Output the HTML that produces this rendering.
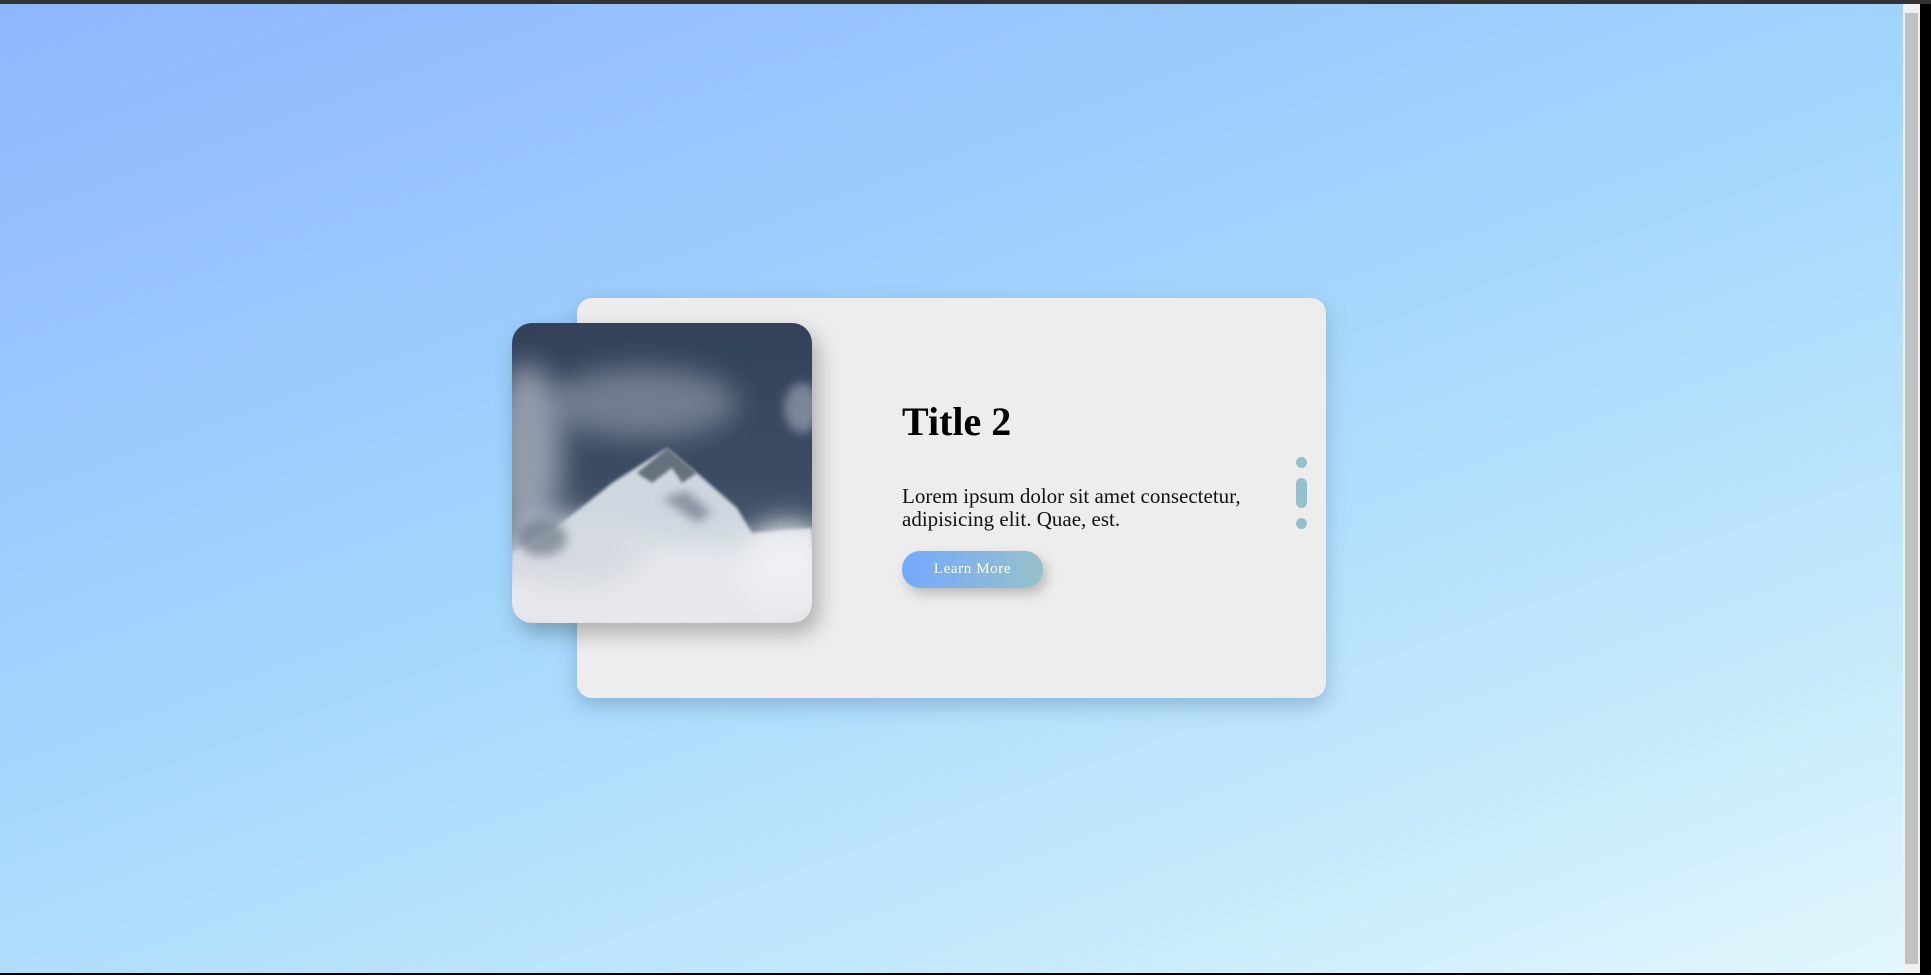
<!DOCTYPE html>
<html><head><meta charset="utf-8"><style>
html,body{margin:0;padding:0;width:1931px;height:975px;overflow:hidden;background:#000}
.page{position:absolute;left:0;top:4px;width:1903px;height:969px;background:linear-gradient(160deg,#8eb6fe 0%,#a2d6fd 45%,#c6eafb 80%,#e2f7fd 100%)}
.topbar{position:absolute;left:0;top:0;width:1931px;height:4px;background:#333}
.sb{position:absolute;left:1903px;top:4px;width:17px;height:969px;background:#f0f0f0}
.sb .th{position:absolute;left:2px;top:9px;width:13px;height:calc(100% - 18px);background:#c1c1c1}
.card{position:absolute;left:577px;top:298px;width:749px;height:400px;background:#ededed;border-radius:15px;box-shadow:0 8px 20px rgba(90,130,170,.45)}
.img{position:absolute;left:512px;top:323px;width:300px;height:300px;border-radius:20px;overflow:hidden;box-shadow:6px 10px 22px rgba(0,0,0,.28)}
h1{position:absolute;left:902px;top:398px;margin:0;font:bold 40px/48px "Liberation Serif",serif;color:#000}
p{position:absolute;left:902px;top:485px;margin:0;font:21px/23px "Liberation Serif",serif;color:#111;width:380px}
.btn{position:absolute;left:902px;top:551px;width:141px;height:37px;border-radius:18px;background:linear-gradient(90deg,#73a9fc,#96c1cb);color:#fff;font:15px/37px "Liberation Serif",serif;letter-spacing:.6px;text-align:center;box-shadow:4px 6px 12px rgba(0,0,0,.22)}
.d{position:absolute;left:1296px;width:11px;background:#94c0cd;border-radius:6px}
</style></head><body>
<div class="topbar"></div>
<div class="page"></div>
<div class="sb"><div class="th"></div></div>
<div class="card"></div>
<div class="img"><svg width="300" height="300" viewBox="0 0 300 300">
<defs>
<linearGradient id="sky" x1="0" y1="0" x2="0" y2="1"><stop offset="0" stop-color="#33425a"/><stop offset=".5" stop-color="#3a4b62"/><stop offset="1" stop-color="#56657a"/></linearGradient>
<filter id="b1" x="-50%" y="-50%" width="200%" height="200%"><feGaussianBlur stdDeviation="14"/></filter>
<filter id="b2" x="-50%" y="-50%" width="200%" height="200%"><feGaussianBlur stdDeviation="5"/></filter>
<filter id="b3" x="-50%" y="-50%" width="200%" height="200%"><feGaussianBlur stdDeviation="1.5"/></filter>
</defs>
<rect width="300" height="300" fill="url(#sky)"/>
<ellipse cx="130" cy="80" rx="95" ry="35" fill="#8a95a5" opacity=".7" filter="url(#b1)"/>
<ellipse cx="15" cy="130" rx="35" ry="90" fill="#b8c0cb" opacity=".7" filter="url(#b1)"/>
<ellipse cx="290" cy="85" rx="18" ry="25" fill="#a8b0bc" opacity=".6" filter="url(#b2)"/>
<polygon points="0,230 50,200 100,160 155,125 185,150 225,185 240,210 300,205 300,300 0,300" fill="#cfd6df" filter="url(#b3)"/>
<path d="M125,150 L155,125 L185,150 L170,160 L160,145 L140,160 Z" fill="#3b4759" opacity=".7" filter="url(#b3)"/>
<path d="M150,175 L175,168 L200,190 L185,200 Z" fill="#4a5668" opacity=".5" filter="url(#b2)"/>
<ellipse cx="150" cy="275" rx="190" ry="55" fill="#e6e8ec" filter="url(#b1)"/>
<ellipse cx="60" cy="230" rx="70" ry="35" fill="#d6dae0" filter="url(#b1)"/>
<ellipse cx="275" cy="240" rx="45" ry="40" fill="#eef0f3" filter="url(#b1)"/>
<ellipse cx="30" cy="215" rx="25" ry="18" fill="#5d6a7c" opacity=".6" filter="url(#b2)"/>
</svg></div>
<h1>Title 2</h1>
<p>Lorem ipsum dolor sit amet consectetur, adipisicing elit. Quae, est.</p>
<div class="btn">Learn More</div>
<div class="d" style="top:457px;height:11px"></div>
<div class="d" style="top:478px;height:30px"></div>
<div class="d" style="top:518px;height:11px"></div>
</body></html>
